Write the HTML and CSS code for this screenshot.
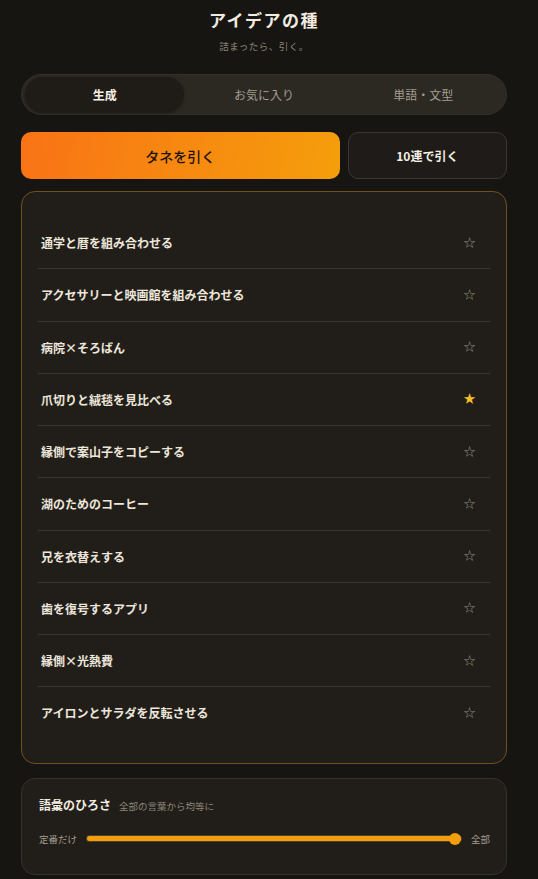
FILE: index.html
```html
<!DOCTYPE html>
<html lang="ja">
<head>
  <meta charset="UTF-8" />
  <meta name="viewport" content="width=device-width, initial-scale=1.0"/>
  <title>アイデアの種</title>
  <link rel="stylesheet" href="styles.css">
</head>
<body>
  <div class="app">
    <header class="header">
      <h1>アイデアの種</h1>
      <p>詰まったら、引く。</p>
    </header>

    <nav class="tabs">
      <button class="tab active">生成</button>
      <button class="tab">お気に入り</button>
      <button class="tab">単語・文型</button>
    </nav>

    <div class="actions">
      <button class="draw-btn">タネを引く</button>
      <button class="draw10-btn">10連で引く</button>
    </div>

    <ul class="idea-list">
      <li class="idea"><span>通学と暦を組み合わせる</span><button class="star">☆</button></li>
      <li class="idea"><span>アクセサリーと映画館を組み合わせる</span><button class="star">☆</button></li>
      <li class="idea"><span>病院×そろばん</span><button class="star">☆</button></li>
      <li class="idea"><span>爪切りと絨毯を見比べる</span><button class="star on">★</button></li>
      <li class="idea"><span>縁側で案山子をコピーする</span><button class="star">☆</button></li>
      <li class="idea"><span>湖のためのコーヒー</span><button class="star">☆</button></li>
      <li class="idea"><span>兄を衣替えする</span><button class="star">☆</button></li>
      <li class="idea"><span>歯を復号するアプリ</span><button class="star">☆</button></li>
      <li class="idea"><span>縁側×光熱費</span><button class="star">☆</button></li>
      <li class="idea"><span>アイロンとサラダを反転させる</span><button class="star">☆</button></li>
    </ul>

    <section class="range-card">
      <div class="range-title">
        <strong>語彙のひろさ</strong>
        <span>全部の言葉から均等に</span>
      </div>
      <div class="range-row">
        <span class="range-label">定番だけ</span>
        <input type="range" min="0" max="100" value="100" class="slider">
        <span class="range-label">全部</span>
      </div>
    </section>
  </div>
</body>
</html>
```

FILE: styles.css
```css
body {
  margin: 0;
  background-color: #171512;
  color: #ede6da;
  font-family: "Noto Sans CJK JP", "Noto Sans", sans-serif;
}

.app {
  width: 486px;
  margin-left: 21px;
  padding-bottom: 4px;
}

.header {
  text-align: center;
  padding-top: 8px;
}

.header h1 {
  margin: 0;
  font-size: 17px;
  line-height: 24px;
  font-weight: 700;
  letter-spacing: 1.5px;
  color: #f2ece0;
}

.header p {
  margin: 7px 0 0;
  font-size: 9.5px;
  line-height: 14px;
  letter-spacing: 0.5px;
  color: #8c8579;
}

.tabs {
  display: grid;
  grid-template-columns: 1fr 1fr 1fr;
  margin-top: 21px;
  padding: 2px 3px;
  background-color: #2c2822;
  border: 1px solid #332f29;
  border-radius: 21px;
}

.tab {
  height: 35px;
  border: none;
  background: none;
  border-radius: 18px;
  font-family: inherit;
  font-size: 12px;
  color: #a39c90;
  cursor: pointer;
}

.tab.active {
  background-color: #1f1c18;
  color: #f5efe4;
  font-weight: 700;
  box-shadow: 0 1px 3px rgba(0, 0, 0, 0.35);
}

.actions {
  display: grid;
  grid-template-columns: 2fr 1fr;
  gap: 8px;
  margin-top: 17px;
}

.draw-btn {
  height: 47px;
  border: none;
  border-radius: 10px;
  background: linear-gradient(100deg, #f97316, #f59e0b);
  color: #1c1207;
  font-family: inherit;
  font-size: 14px;
  font-weight: 500;
  cursor: pointer;
}

.draw10-btn {
  height: 47px;
  border: 1px solid #3b362f;
  border-radius: 10px;
  background-color: #1e1b18;
  color: #f5efe4;
  font-family: inherit;
  font-size: 12px;
  font-weight: 700;
  cursor: pointer;
}

.idea-list {
  list-style: none;
  margin: 12px 0 0;
  padding: 25px 16px 24px;
  background-color: #211e1a;
  border: 1px solid #6b5220;
  border-radius: 14px;
}

.idea {
  display: flex;
  align-items: center;
  justify-content: space-between;
  height: 51.25px;
  padding: 0 7px 0 3px;
  border-bottom: 1px solid #3a352e;
  font-size: 12px;
  font-weight: 700;
  color: #ede6da;
}

.idea:last-child {
  border-bottom: none;
}

.star {
  width: 28px;
  border: none;
  background: none;
  padding: 0;
  font-size: 13px;
  color: #928a7d;
  cursor: pointer;
}

.star.on {
  color: #fbbf24;
}

.range-card {
  margin-top: 14px;
  padding: 18px 16px 28px 17px;
  background-color: #211e1a;
  border: 1px solid #36312a;
  border-radius: 14px;
}

.range-title {
  display: flex;
  align-items: baseline;
  gap: 8px;
}

.range-title strong {
  font-size: 12px;
  line-height: 16px;
  color: #f2ece0;
}

.range-title span {
  font-size: 9.5px;
  color: #8c8579;
}

.range-row {
  display: flex;
  align-items: center;
  gap: 10px;
  margin-top: 19px;
}

.range-label {
  font-size: 9.5px;
  color: #a39c90;
}

.slider {
  -webkit-appearance: none;
  appearance: none;
  flex: 1;
  height: 5px;
  margin: 0;
  border-radius: 3px;
  background-color: #f59e0b;
  box-shadow: 0 0 0 1px #4a4034;
}

.slider::-webkit-slider-thumb {
  -webkit-appearance: none;
  width: 12px;
  height: 12px;
  border-radius: 50%;
  background-color: #f59e0b;
  border: none;
}
```
